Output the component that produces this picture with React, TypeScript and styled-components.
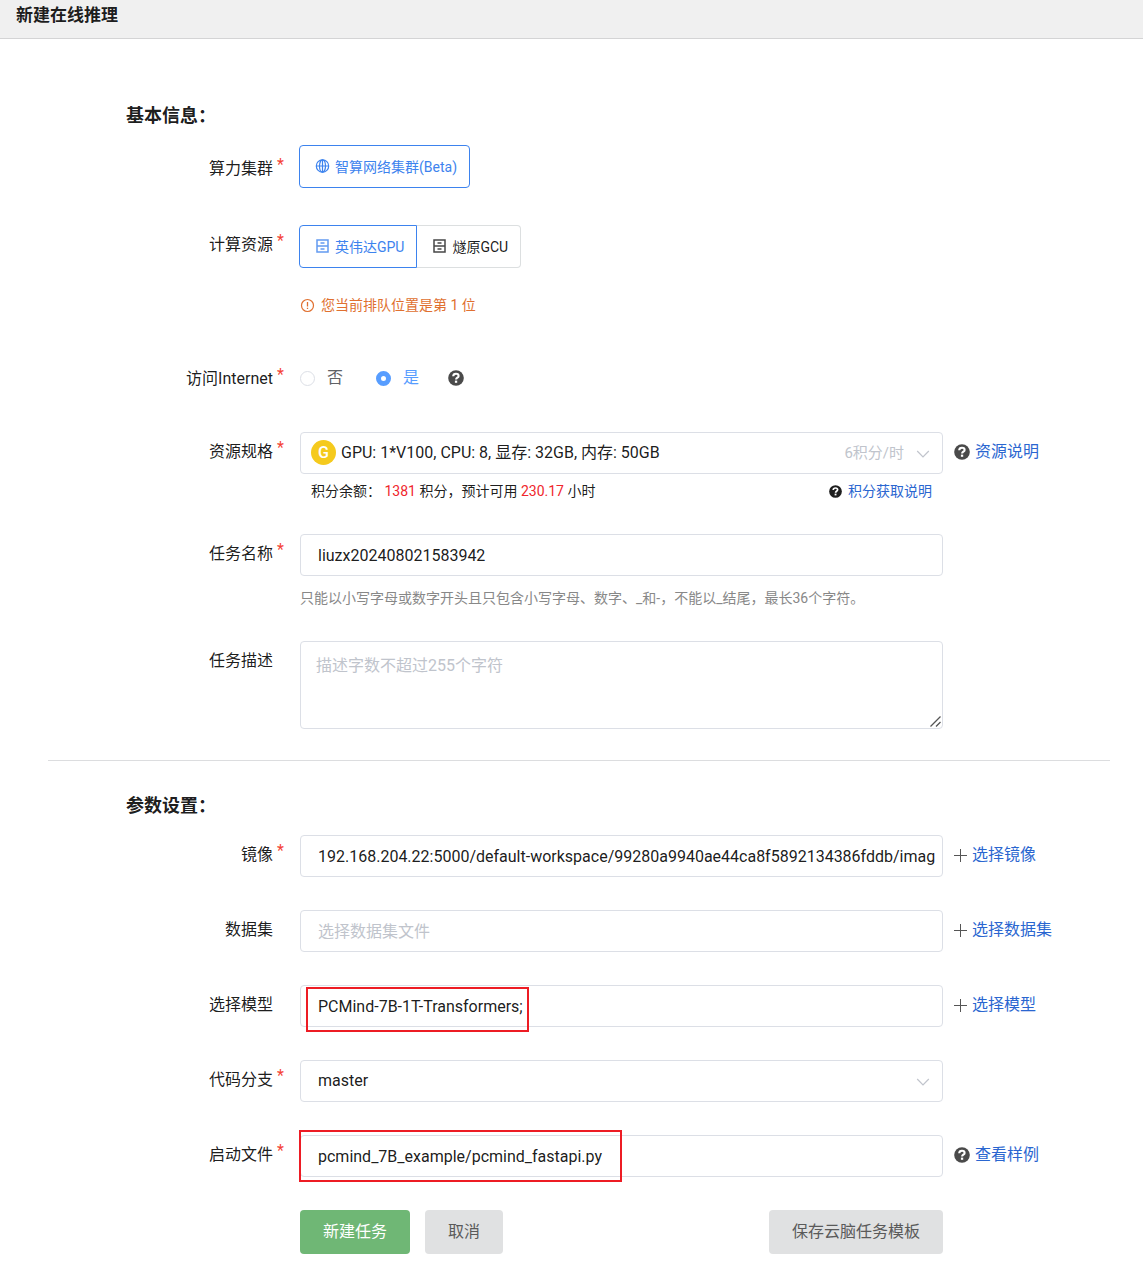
import React from "react";
import styled, { createGlobalStyle, css } from "styled-components";

const fontStack = `Roboto, "Noto Sans CJK SC", "Liberation Sans", sans-serif`;

const GlobalStyle = createGlobalStyle`
  *, *::before, *::after { box-sizing: border-box; }
  body {
    margin: 0;
    background: #fff;
    color: rgba(0, 0, 0, 0.9);
    font: 16px/20px ${fontStack};
  }
  input, select, textarea, button { font: inherit; color: inherit; margin: 0; }
`;

const Header = styled.header`
  height: 39px;
  padding: 5px 16px 0;
  background: #f0f0f0;
  border-bottom: 1px solid #d4d4d5;
`;

const PageTitle = styled.h1`
  margin: 0;
  font-size: 17px;
  line-height: 20px;
  font-weight: 700;
`;

const Form = styled.form`
  padding: 61px 33px 14px 48px;
`;

const Section = styled.section`
  display: flex;
  flex-direction: column;
  gap: 33px;
`;

const SectionTitle = styled.h2`
  margin: 0 0 -13px 78px;
  font-size: 18px;
  line-height: 32px;
  height: 25px;
  font-weight: 700;
`;

const Divider = styled.hr`
  margin: 31px 0 29px;
  border: 0;
  border-top: 1px solid #dcdddf;
`;

const Row = styled.div`
  display: grid;
  grid-template-columns: 252px minmax(0, 1fr) 167px;
  align-items: start;
`;

const LabelCell = styled.div<{ $tall?: boolean }>`
  display: flex;
  justify-content: flex-end;
  padding-right: 16px;
  padding-top: ${(p) => (p.$tall ? 4 : 0)}px;
  line-height: 40px;
`;

const Star = styled.span`
  width: 11px;
  padding-left: 4px;
  color: #f44336;
  line-height: 32px;
`;

const Control = styled.div`
  position: relative;
`;

const Aside = styled.div`
  display: flex;
  align-items: center;
  gap: 5px;
  height: 40px;
  padding-left: 11px;
`;

const Link = styled.a`
  color: #2a66d0;
  text-decoration: none;
`;

const Choices = styled.div`
  display: flex;
  margin-left: -1px;
  padding-bottom: 4px;
`;

const Choice = styled.button<{ $active?: boolean }>`
  display: flex;
  align-items: center;
  gap: 5px;
  height: 43px;
  padding: 0 12px 0 15px;
  border: 1px solid #dcdfe0;
  background: #fff;
  font-size: 14px;
  &:first-child { border-radius: 4px 0 0 4px; }
  &:last-child { border-radius: 0 4px 4px 0; }
  &:only-child { border-radius: 4px; }
  & + & { border-left: 0; }
  ${(p) => p.$active && css`
    border-color: #3d83ee;
    color: #3d83ee;
  `}
`;

const Notice = styled.p`
  display: flex;
  align-items: center;
  gap: 6px;
  margin: 23px 0 11px;
  color: #e07030;
  font-size: 14px;
`;

const Radios = styled.div`
  display: flex;
  align-items: center;
  height: 40px;
  padding-bottom: 2px;
  gap: 29px;
`;

const RadioLabel = styled.label`
  display: flex;
  align-items: center;
  gap: 12px;
  color: #606266;
  & + & { margin-left: 4px; }
  &:has(input:checked) { color: #579dff; }
`;

const Radio = styled.input`
  appearance: none;
  width: 15px;
  height: 15px;
  border: 1px solid #dcdfe6;
  border-radius: 50%;
  background: #fff;
  &:checked { border: 5px solid #579dff; }
`;

const field = css`
  display: block;
  width: 100%;
  border: 1px solid #dcdfe6;
  border-radius: 4px;
  background: #fff;
  outline: 0;
  &::placeholder { color: #c0c4cc; opacity: 1; }
`;

const TextInput = styled.input`
  ${field}
  height: 42px;
  padding: 0 6px 0 17px;
`;

const TextArea = styled.textarea`
  ${field}
  height: 88px;
  padding: 14px 15px;
  resize: vertical;
  &::-webkit-resizer { background: transparent; border: 0; }
`;

const Grip = styled.svg`
  position: absolute;
  right: 2px;
  bottom: 2px;
  pointer-events: none;
`;

const Select = styled.select<{ $badge?: boolean }>`
  ${field}
  appearance: none;
  height: 42px;
  padding: 0 40px 0 ${(p) => (p.$badge ? 40 : 17)}px;
`;

const SelectBox = styled.div`
  position: relative;
`;

const SelectBadge = styled.span`
  position: absolute;
  left: 11px;
  top: 8px;
  width: 25px;
  height: 25px;
  border-radius: 50%;
  background: #f5ca1d;
  color: #fff;
  line-height: 25px;
  font-weight: 500;
  text-align: center;
  pointer-events: none;
`;

const SelectEnd = styled.span`
  position: absolute;
  right: 13px;
  top: 0;
  display: flex;
  align-items: center;
  gap: 12px;
  height: 42px;
  color: #c0c4cc;
  pointer-events: none;
`;

const Price = styled.span`
  font-size: 15px;
`;

const Balance = styled.div`
  display: flex;
  justify-content: space-between;
  margin-top: 7px;
  padding: 0 11px;
  font-size: 14px;
`;

const BalanceHelp = styled.span`
  display: flex;
  align-items: center;
  gap: 6px;
`;

const Amount = styled.span`
  color: #f0262d;
`;

const Hint = styled.p`
  margin: 12px 0 0;
  color: #888;
  font-size: 14px;
`;

const Highlight = styled.span<{ $x: number; $y: number; $w: number; $h: number }>`
  position: absolute;
  left: ${(p) => p.$x}px;
  top: ${(p) => p.$y}px;
  width: ${(p) => p.$w}px;
  height: ${(p) => p.$h}px;
  border: 2px solid #ed1c24;
  pointer-events: none;
`;

const Actions = styled.div`
  display: flex;
  gap: 15px;
`;

const Button = styled.button<{ $primary?: boolean; $end?: boolean }>`
  height: 44px;
  padding: 0 23px;
  border: 0;
  border-radius: 4px;
  background: ${(p) => (p.$primary ? "#6fb775" : "#e0e1e2")};
  color: ${(p) => (p.$primary ? "#fff" : "#5a5a5a")};
  ${(p) => p.$end && "margin-left: auto;"}
`;

const Icon = styled.svg`
  flex: none;
  display: block;
`;

const GlobeIcon = () => (
  <Icon width="15" height="15" viewBox="0 0 15 15" fill="none" stroke="currentColor" strokeWidth="1.2">
    <circle cx="7.5" cy="7" r="6.2" />
    <ellipse cx="7.5" cy="7" rx="3" ry="6.2" />
    <path d="M7.5 .8v12.4M1.3 7h12.4" />
  </Icon>
);

const ServerIcon = () => (
  <Icon width="15" height="15" viewBox="0 0 15 15" fill="none" stroke="currentColor" opacity="0.8">
    <path d="M2 1h11v12H2zM2 7h11M5.5 4h4M5.5 10h4" strokeWidth="1.5" />
  </Icon>
);

const AlertIcon = () => (
  <Icon width="15" height="15" viewBox="0 0 15 15" fill="none" stroke="currentColor">
    <circle cx="7.5" cy="7.5" r="6" strokeWidth="1.2" />
    <path d="M7.5 4v4.5M7.5 9.7v1.4" strokeWidth="1.3" />
  </Icon>
);

const HelpIcon = ({ size = 16, color = "#4a4a4a" }: { size?: number; color?: string }) => (
  <Icon width={size} height={size} viewBox="0 0 16 16" fill="none">
    <circle cx="8" cy="8" r="7.8" fill={color} />
    <path d="M5.2 6.2C5.3 4.4 6.4 3.7 8 3.7s2.6.9 2.6 2.2c0 1.8-2.5 1.8-2.5 3.6" stroke="#fff" strokeWidth="2.1" />
    <path d="M6.9 10.6h2.3v2.2H6.9z" fill="#fff" />
  </Icon>
);

const PlusIcon = () => (
  <Icon width="13" height="14" viewBox="0 0 13 14" stroke="#555">
    <path d="M0 7.5h13M6.5 1v13" />
  </Icon>
);

const ChevronIcon = () => (
  <Icon width="14" height="14" viewBox="0 0 14 14" fill="none" stroke="#c0c4cc" strokeWidth="1.2">
    <path d="M1.2 5 7 10.8 12.8 5" />
  </Icon>
);

type FieldProps = {
  label: string;
  id?: string;
  required?: boolean;
  tall?: boolean;
  aside?: React.ReactNode;
  children: React.ReactNode;
};

const Field = ({ label, id, required, tall, aside, children }: FieldProps) => (
  <Row>
    <LabelCell $tall={tall}>
      {id ? <label htmlFor={id}>{label}</label> : <span>{label}</span>}
      <Star>{required ? "*" : ""}</Star>
    </LabelCell>
    <Control>{children}</Control>
    {aside && <Aside>{aside}</Aside>}
  </Row>
);

export default function App() {
  return (
    <>
      <GlobalStyle />
      <Header>
        <PageTitle>新建在线推理</PageTitle>
      </Header>
      <Form onSubmit={(e) => e.preventDefault()}>
        <Section>
          <SectionTitle>基本信息：</SectionTitle>
          <Field label="算力集群" required tall>
            <Choices>
              <Choice type="button" $active><GlobeIcon />智算网络集群(Beta)</Choice>
            </Choices>
          </Field>
          <Field label="计算资源" required>
            <Choices>
              <Choice type="button" $active><ServerIcon />英伟达GPU</Choice>
              <Choice type="button"><ServerIcon />燧原GCU</Choice>
            </Choices>
            <Notice><AlertIcon />您当前排队位置是第 1 位</Notice>
          </Field>
          <Field label="访问Internet" required>
            <Radios>
              <RadioLabel><Radio type="radio" name="internet" />否</RadioLabel>
              <RadioLabel><Radio type="radio" name="internet" defaultChecked />是</RadioLabel>
              <HelpIcon />
            </Radios>
          </Field>
          <Field
            label="资源规格"
            id="spec"
            required
            aside={<><HelpIcon /><Link href="#spec-help">资源说明</Link></>}
          >
            <SelectBox>
              <Select id="spec" $badge>
                <option>GPU: 1*V100, CPU: 8, 显存: 32GB, 内存: 50GB</option>
              </Select>
              <SelectBadge>G</SelectBadge>
              <SelectEnd><Price>6积分/时</Price><ChevronIcon /></SelectEnd>
            </SelectBox>
            <Balance>
              <span>积分余额： <Amount>1381</Amount> 积分，预计可用 <Amount>230.17</Amount> 小时</span>
              <BalanceHelp>
                <HelpIcon size={13} color="#1f1f1f" />
                <Link href="#points">积分获取说明</Link>
              </BalanceHelp>
            </Balance>
          </Field>
          <Field label="任务名称" id="name" required>
            <TextInput id="name" defaultValue="liuzx202408021583942" />
            <Hint>只能以小写字母或数字开头且只包含小写字母、数字、_和-，不能以_结尾，最长36个字符。</Hint>
          </Field>
          <Field label="任务描述" id="desc">
            <TextArea id="desc" placeholder="描述字数不超过255个字符" />
            <Grip width="11" height="11" viewBox="0 0 11 11" stroke="#555" strokeWidth="1.3">
              <path d="M.5 10.5l10-10M6 10.5 10.5 6" />
            </Grip>
          </Field>
        </Section>
        <Divider />
        <Section>
          <SectionTitle>参数设置：</SectionTitle>
          <Field label="镜像" id="image" required aside={<><PlusIcon /><Link href="#image">选择镜像</Link></>}>
            <TextInput
              id="image"
              defaultValue="192.168.204.22:5000/default-workspace/99280a9940ae44ca8f5892134386fddb/imag"
            />
          </Field>
          <Field label="数据集" id="dataset" aside={<><PlusIcon /><Link href="#dataset">选择数据集</Link></>}>
            <TextInput id="dataset" placeholder="选择数据集文件" />
          </Field>
          <Field label="选择模型" id="model" aside={<><PlusIcon /><Link href="#model">选择模型</Link></>}>
            <TextInput id="model" defaultValue="PCMind-7B-1T-Transformers;" />
            <Highlight $x={6} $y={2} $w={223} $h={45} />
          </Field>
          <Field label="代码分支" id="branch" required>
            <SelectBox>
              <Select id="branch"><option>master</option></Select>
              <SelectEnd><ChevronIcon /></SelectEnd>
            </SelectBox>
          </Field>
          <Field label="启动文件" id="boot" required aside={<><HelpIcon /><Link href="#sample">查看样例</Link></>}>
            <TextInput id="boot" defaultValue="pcmind_7B_example/pcmind_fastapi.py" />
            <Highlight $x={-1} $y={-5} $w={323} $h={52} />
          </Field>
          <Row>
            <span />
            <Actions>
              <Button type="submit" $primary>新建任务</Button>
              <Button type="button">取消</Button>
              <Button type="button" $end>保存云脑任务模板</Button>
            </Actions>
          </Row>
        </Section>
      </Form>
    </>
  );
}
